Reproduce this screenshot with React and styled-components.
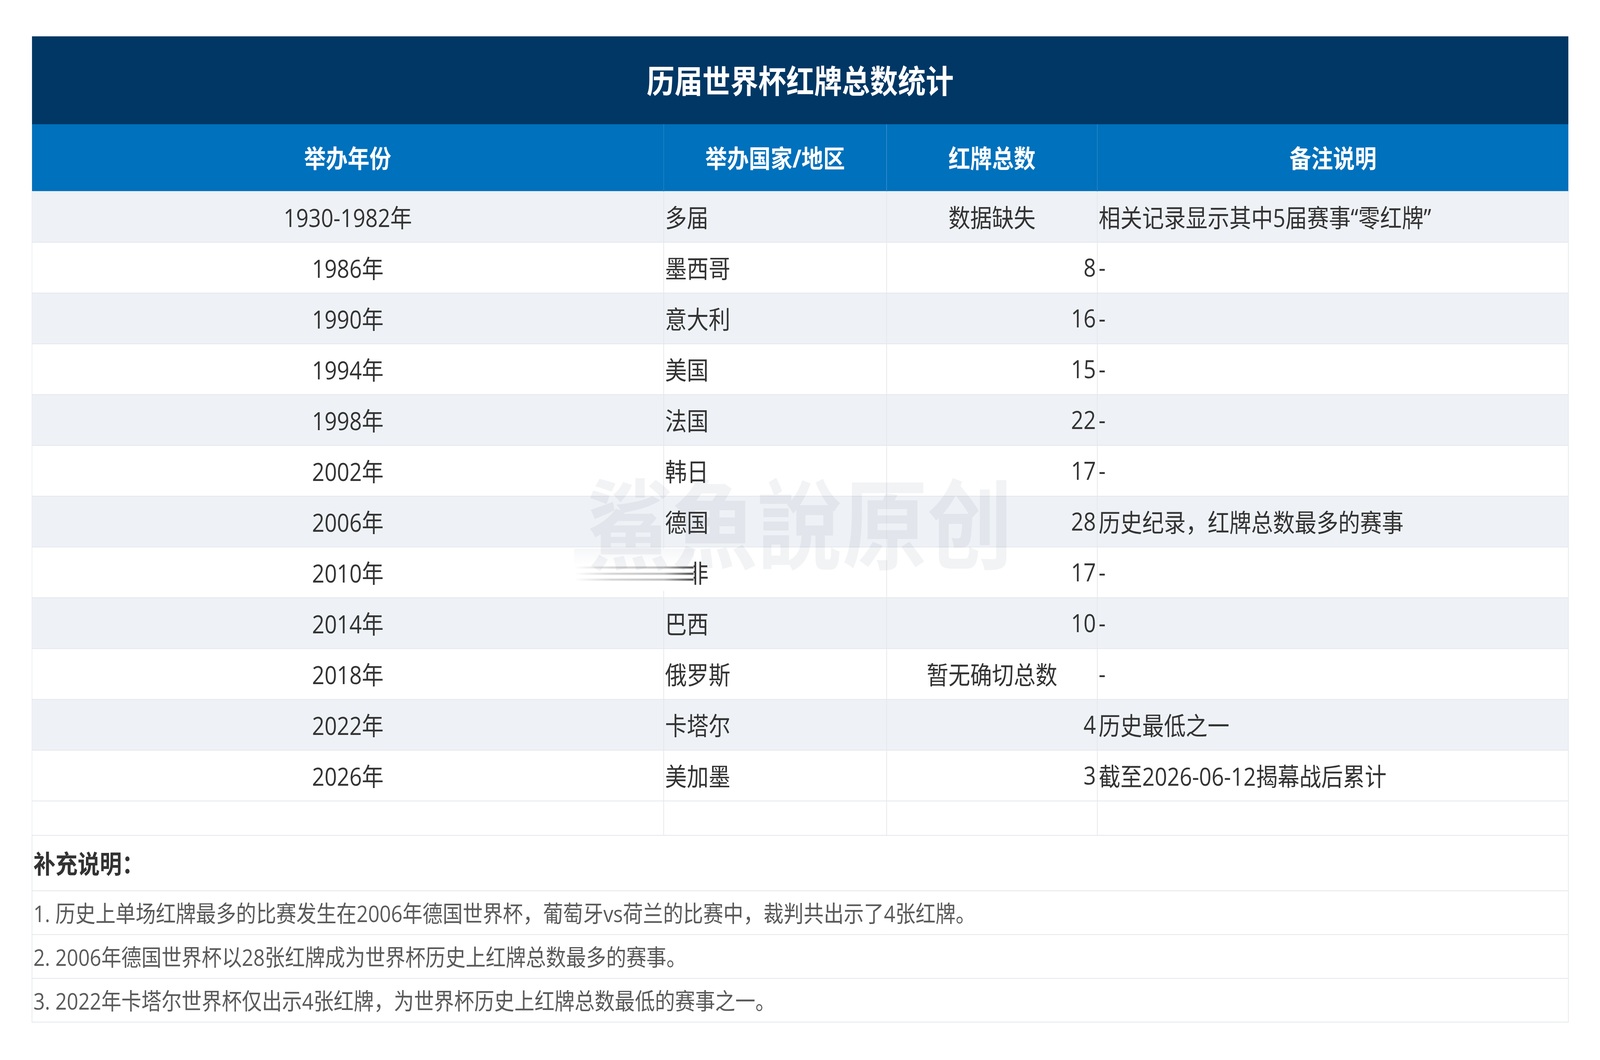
import React, { useState } from "react";
import styled, { createGlobalStyle } from "styled-components";

const FONT = `"Open Sans", "Noto Sans CJK SC", sans-serif`;
const DESIGN_WIDTH = 4701;

const Global = createGlobalStyle`
  html, body { margin: 0; padding: 0; background: #fff; overflow: hidden; }
  body { font-family: ${FONT}; }
`;

const Frame = styled.div`
  width: 100%;
  height: 2713px;
  overflow: hidden;
`;

const Page = styled.div`
  width: ${DESIGN_WIDTH}px;
  height: 2713px;
  box-sizing: border-box;
  padding: 93px 94px 0 93px;
  transform-origin: left top;
`;

const Sheet = styled.div`
  position: relative;
  width: 4514px;
`;

const Table = styled.table`
  width: 100%;
  table-layout: fixed;
  border-collapse: collapse;
  font-family: ${FONT};
`;

const Col = styled.col`
  width: ${(p) => p.$w}px;
`;

const TitleCell = styled.th`
  height: 225px;
  box-sizing: border-box;
  padding: 0 0 6px;
  background: #003764;
  color: #fff;
  font-size: 82px;
  font-weight: 700;
  text-align: center;
`;

const HeadCell = styled.th`
  height: 172px;
  box-sizing: border-box;
  padding: 0 0 4px;
  background: #0071bc;
  color: #fff;
  font-size: 64px;
  font-weight: 700;
  text-align: center;
  border-left: 2px solid rgba(255, 255, 255, 0.1);
  &:first-child { border-left: 0; }
`;

const Row = styled.tr`
  background: ${(p) => (p.$shaded ? "#eef2f6" : "#ffffff")};
`;

const Cell = styled.td`
  height: ${(p) => p.$h || 130}px;
  padding: 0 3px 4px;
  box-sizing: border-box;
  font-size: 64px;
  color: #333333;
  text-align: ${(p) => p.$align || "left"};
  white-space: nowrap;
  border: 2px solid #e4e7eb;
  border-left: 2px solid ${(p) => (p.$shaded ? "#e9edf1" : "#eceef1")};
`;

const NoteHead = styled.td`
  height: 142px;
  padding: 0 3px 4px;
  box-sizing: border-box;
  font-size: 65px;
  font-weight: 700;
  color: #333333;
  border: 2px solid #e4e7eb;
  text-align: left;
`;

const Note = styled.td`
  height: 112px;
  padding: 0 3px 4px;
  box-sizing: border-box;
  font-size: 59px;
  color: #5a5a5a;
  border: 2px solid #e4e7eb;
  text-align: left;
  white-space: nowrap;
`;

const Watermark = styled.div`
  position: absolute;
  left: 1632px;
  top: 1085px;
  font-family: "Noto Sans CJK SC", sans-serif;
  font-size: 250px;
  line-height: 300px;
  font-weight: 700;
  color: rgba(70, 85, 110, 0.07);
  white-space: nowrap;
  pointer-events: none;
`;

const Smear = styled.div`
  position: absolute;
  left: 1594px;
  top: 1311px;
  width: 351px;
  height: 110px;
  background: linear-gradient(to bottom, #f6f7f9 0%, #ffffff 40%, #ffffff 96%, rgba(255, 255, 255, 0) 100%);
  pointer-events: none;
`;

const Streak = styled.div`
  position: absolute;
  left: 0;
  right: 0;
  top: ${(p) => p.$top}px;
  height: 5px;
  filter: blur(1px);
  background: linear-gradient(
    to right,
    rgba(60, 60, 60, 0) 0%,
    rgba(60, 60, 60, 0.22) 30%,
    rgba(60, 60, 60, 0.35) 75%,
    rgba(50, 50, 50, 0.95) 100%
  );
`;

const rows = [
  ["1930-1982年", "多届", "数据缺失", "相关记录显示其中5届赛事“零红牌”", "center"],
  ["1986年", "墨西哥", "8", "-"],
  ["1990年", "意大利", "16", "-"],
  ["1994年", "美国", "15", "-"],
  ["1998年", "法国", "22", "-"],
  ["2002年", "韩日", "17", "-"],
  ["2006年", "德国", "28", "历史纪录，红牌总数最多的赛事"],
  ["2010年", "南非", "17", "-"],
  ["2014年", "巴西", "10", "-"],
  ["2018年", "俄罗斯", "暂无确切总数", "-", "center"],
  ["2022年", "卡塔尔", "4", "历史最低之一"],
  ["2026年", "美加墨", "3", "截至2026-06-12揭幕战后累计"],
];

const notes = [
  "1. 历史上单场红牌最多的比赛发生在2006年德国世界杯，葡萄牙vs荷兰的比赛中，裁判共出示了4张红牌。",
  "2. 2006年德国世界杯以28张红牌成为世界杯历史上红牌总数最多的赛事。",
  "3. 2022年卡塔尔世界杯仅出示4张红牌，为世界杯历史上红牌总数最低的赛事之一。",
];

export default function App() {
  // The window may be narrower than the design: fit the page to its width.
  const [fit] = useState(() => Math.min(1, window.innerWidth / DESIGN_WIDTH));
  return (
    <Frame>
      <Global />
      <Page style={{ transform: `scaleX(${fit})` }}>
        <Sheet>
          <Table>
            <colgroup>
              <Col $w={1856} />
              <Col $w={655} />
              <Col $w={619} />
              <Col $w={1384} />
            </colgroup>
            <thead>
              <tr>
                <TitleCell colSpan={4}>历届世界杯红牌总数统计</TitleCell>
              </tr>
              <tr>
                <HeadCell>举办年份</HeadCell>
                <HeadCell>举办国家/地区</HeadCell>
                <HeadCell>红牌总数</HeadCell>
                <HeadCell>备注说明</HeadCell>
              </tr>
            </thead>
            <tbody>
              {rows.map(([year, host, total, memo, align], i) => (
                <Row key={year} $shaded={i % 2 === 0}>
                  <Cell $align="center" $shaded={i % 2 === 0}>{year}</Cell>
                  <Cell $shaded={i % 2 === 0}>{host}</Cell>
                  <Cell $align={align || "right"} $shaded={i % 2 === 0}>{total}</Cell>
                  <Cell $shaded={i % 2 === 0}>{memo}</Cell>
                </Row>
              ))}
              <Row>
                <Cell $h={88} />
                <Cell $h={88} />
                <Cell $h={88} />
                <Cell $h={88} />
              </Row>
              <tr>
                <NoteHead colSpan={4}>补充说明：</NoteHead>
              </tr>
              {notes.map((n) => (
                <tr key={n}>
                  <Note colSpan={4}>{n}</Note>
                </tr>
              ))}
            </tbody>
          </Table>
          <Smear>
            <Streak $top={46} />
            <Streak $top={62} />
            <Streak $top={77} />
          </Smear>
          <Watermark>鯊魚說原创</Watermark>
        </Sheet>
      </Page>
    </Frame>
  );
}
